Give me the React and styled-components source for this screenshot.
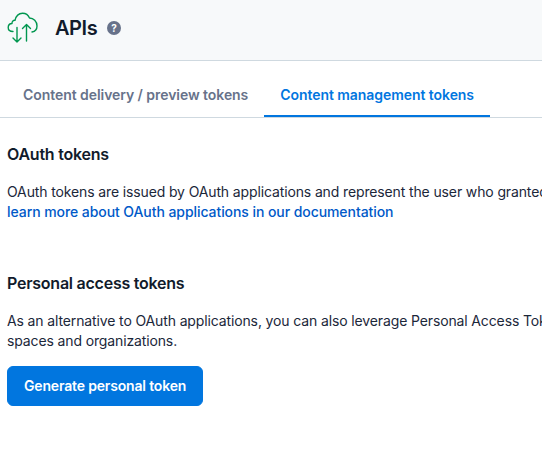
import React from 'react';
import styled, { createGlobalStyle } from 'styled-components';

const GlobalStyle = createGlobalStyle`
  html, body {
    margin: 0;
    padding: 0;
    background: #fff;
    overflow: hidden;
  }
  body {
    font-family: Inter, "Noto Sans", sans-serif;
    color: #1b273a;
  }
`

const PageWrapper = styled.div`
  width: 542px;
  height: 454px;
  overflow: hidden;
`

const Header = styled.header`
  display: flex;
  align-items: center;
  height: 61px;
  box-sizing: border-box;
  padding: 0 0 5px 7px;
  background: #f7f9fa;
  border-bottom: 1px solid #cfd9e0;
`

const LogoWrapper = styled.div`
  display: flex;
  width: 32px;
  height: 32px;
  margin-right: 16px;
`

const PageTitle = styled.h1`
  margin: 0 10px 0 0;
  font-size: 20px;
  line-height: 28px;
  font-weight: 600;
  letter-spacing: -0.45px;
  color: #111b2b;
`

const HelpIcon = styled.svg`
  display: block;
  width: 14px;
  height: 14px;
`

const TabList = styled.nav`
  display: flex;
  height: 56px;
  padding-left: 7px;
  border-bottom: 1px solid #cfd9e0;
`

const Tab = styled.div`
  display: flex;
  align-items: center;
  height: 56px;
  box-sizing: border-box;
  padding: 13px 16px 0;
  font-size: 14px;
  line-height: 20px;
  font-weight: 600;
  letter-spacing: -0.06px;
  color: ${(props) => (props.$active ? '#0176df' : '#67728a')};
  border-bottom: 2px solid ${(props) => (props.$active ? '#0176df' : 'transparent')};
  white-space: nowrap;
`

const Content = styled.main`
  padding: 27px 0 0 7px;
`

const Section = styled.section`
  margin-bottom: 52px;
`

const SectionTitle = styled.h2`
  margin: 0 0 19px;
  font-size: 16px;
  line-height: 18px;
  font-weight: 600;
  letter-spacing: -0.24px;
  color: #111b2b;
`

const Paragraph = styled.p`
  margin: 0;
  width: 535px;
  height: 40px;
  overflow: hidden;
  font-size: 14px;
  line-height: 20px;
  letter-spacing: -0.13px;
  color: #1b273a;
`

const ParagraphLine = styled.span`
  display: block;
  white-space: nowrap;
`

const DocLink = styled.a`
  display: block;
  color: #0059c8;
  font-weight: 500;
  letter-spacing: -0.07px;
  text-decoration: none;
`

const PrimaryButton = styled.button`
  display: block;
  margin-top: 15px;
  height: 40px;
  padding: 0 16px;
  border: 1px solid #0176df;
  border-radius: 6px;
  background: #0176df;
  color: #fff;
  font-family: inherit;
  font-size: 14px;
  line-height: 20px;
  font-weight: 600;
  letter-spacing: -0.17px;
`

const CloudLogo = () => (
  <svg viewBox="0 0 32 32" width="32" height="32" fill="none" stroke="#00964f" strokeWidth="1.4" strokeLinecap="round" strokeLinejoin="round">
    <path d="M6 19.5C3 19.5 1.2 17.8 1.2 15.5C1.2 13.3 2.8 11.6 5 11.5C4.8 9.5 6.5 8 8 8.3C9 4 12 1.2 15.5 1.2C19 1.2 21.5 3.5 22.5 6C26.5 6 30 9.5 30 14C30 17 28 19.5 25 20" />
    <path d="M10 15.5V30M6 26l4 4 4-4" />
    <path d="M19.5 12.5V29M15.5 16.5l4-4 4 4" />
  </svg>
);

const HelpBadge = () => (
  <HelpIcon viewBox="0 0 14 14">
    <circle cx="7" cy="7" r="7" fill="#67728a" />
    <text x="7" y="10.6" textAnchor="middle" fontSize="10" fontWeight="700" fill="#fff" fontFamily="Inter, sans-serif">?</text>
  </HelpIcon>
);

const App = () => {
  return (
    <PageWrapper>
      <GlobalStyle />
      <Header>
        <LogoWrapper>
          <CloudLogo />
        </LogoWrapper>
        <PageTitle>APIs</PageTitle>
        <HelpBadge />
      </Header>
      <TabList>
        <Tab>Content delivery / preview tokens</Tab>
        <Tab $active>Content management tokens</Tab>
      </TabList>
      <Content>
        <Section>
          <SectionTitle>OAuth tokens</SectionTitle>
          <Paragraph>
            <ParagraphLine>OAuth tokens are issued by OAuth applications and represent the user who granted access.</ParagraphLine>
            <DocLink href="#">learn more about OAuth applications in our documentation</DocLink>
          </Paragraph>
        </Section>
        <Section>
          <SectionTitle>Personal access tokens</SectionTitle>
          <Paragraph>
            <ParagraphLine>As an alternative to OAuth applications, you can also leverage Personal Access Tokens to use the API.</ParagraphLine>
            <ParagraphLine>spaces and organizations.</ParagraphLine>
          </Paragraph>
          <PrimaryButton>Generate personal token</PrimaryButton>
        </Section>
      </Content>
    </PageWrapper>
  )
}

export default App;
